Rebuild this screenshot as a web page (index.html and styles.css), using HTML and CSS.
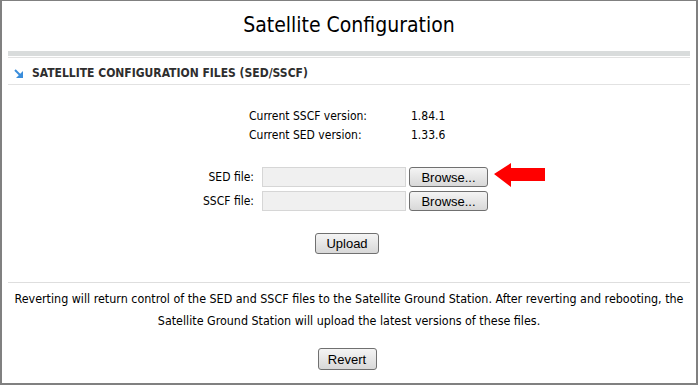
FILE: index.html
```html
<!DOCTYPE html>
<html lang="en">
<head>
    <meta charset="UTF-8">
    <title>Satellite Configuration</title>
    <link rel="stylesheet" href="styles.css">
</head>
<body>
    <div class="window">
        <h1 class="title">Satellite Configuration</h1>
        <div class="title-bar"></div>

        <div class="section-head">
            <svg class="head-icon" width="9" height="9" viewBox="0 0 9 9">
                <path d="M1 1 L6.5 6.5" stroke="#3a8ddb" stroke-width="2" fill="none"/>
                <polygon points="9,2 9,9 2,9" fill="#3a8ddb"/>
            </svg>
            <span>SATELLITE CONFIGURATION FILES (SED/SSCF)</span>
        </div>

        <div class="versions">
            <span>Current SSCF version:</span><span>1.84.1</span>
            <span>Current SED version:</span><span>1.33.6</span>
        </div>

        <div class="files">
            <label for="sed-file">SED file:</label>
            <input type="text" class="file-path" id="sed-file">
            <button class="btn browse">Browse...</button>
            <svg class="hint-arrow" width="51" height="24" viewBox="0 0 51 24">
                <polygon points="0,11 17,0 17,5 51,5 51,18 17,18 17,24" fill="#ff0000"/>
            </svg>

            <label for="sscf-file">SSCF file:</label>
            <input type="text" class="file-path" id="sscf-file">
            <button class="btn browse">Browse...</button>
            <span></span>
        </div>

        <div class="actions upload-row">
            <button class="btn upload">Upload</button>
        </div>

        <div class="revert">
            <p>Reverting will return control of the SED and SSCF files to the Satellite Ground Station. After reverting and rebooting, the<br>
            Satellite Ground Station will upload the latest versions of these files.</p>
            <div class="actions">
                <button class="btn revert-btn">Revert</button>
            </div>
        </div>
    </div>
</body>
</html>
```

FILE: styles.css
```css
body {
    margin: 0;
    font-family: "DejaVu Sans Condensed", "DejaVu Sans", sans-serif;
    font-size: 12px;
    color: #000;
    background-color: #fff;
}

.window {
    width: 698px;
    height: 385px;
    box-sizing: border-box;
    border: 2px solid #808080;
    border-top-width: 1px;
    padding: 0 6px;
}

.title {
    margin: 0;
    height: 50px;
    line-height: 48px;
    text-align: center;
    font-size: 21px;
    font-weight: normal;
}

.title-bar {
    height: 5px;
    margin-bottom: 1px;
    background-color: #d9dcdc;
}

.section-head {
    display: flex;
    align-items: center;
    height: 28px;
    box-sizing: border-box;
    padding: 4px 0 0 6px;
    border-top: 1px solid #e2e2e2;
    border-bottom: 1px solid #e2e2e2;
    font-size: 12px;
    font-weight: bold;
    color: #2e2e2e;
}

.head-icon {
    margin-right: 9px;
}

.versions {
    display: grid;
    grid-template-columns: 162px auto;
    line-height: 19px;
    margin-top: 22px;
    padding-left: 241px;
}

.files {
    display: grid;
    grid-template-columns: 60px 152px 82px auto;
    grid-auto-rows: 20px;
    row-gap: 4px;
    align-items: center;
    margin-top: 22px;
    padding-left: 186px;
}

.files label {
    text-align: right;
    white-space: nowrap;
}

.file-path {
    width: 144px;
    height: 20px;
    box-sizing: border-box;
    margin: 0 0 0 8px;
    border: 1px solid #d6d6d6;
    background-color: #f0f0f0;
}

.btn {
    font-family: "Liberation Sans", Arial, sans-serif;
    font-size: 13px;
    color: #000;
    padding: 0;
    border: 1px solid #707070;
    border-radius: 3px;
    background: linear-gradient(#f4f4f4, #e6e6e6 50%, #d8d8d8);
    box-sizing: border-box;
}

.browse {
    width: 79px;
    height: 20px;
    margin-left: 3px;
}

.hint-arrow {
    margin: -4px 0 0 6px;
}

.actions {
    display: flex;
    justify-content: center;
    padding-right: 4px;
}

.upload-row {
    margin-top: 22px;
}

.upload {
    width: 64px;
    height: 21px;
}

.revert {
    margin-top: 28px;
    border-top: 1px solid #dedede;
}

.revert p {
    margin: 5px 0 0;
    line-height: 22px;
    font-size: 12.4px;
    text-align: center;
}

.revert .actions {
    margin-top: 16px;
}

.revert-btn {
    width: 59px;
    height: 22px;
}
```
